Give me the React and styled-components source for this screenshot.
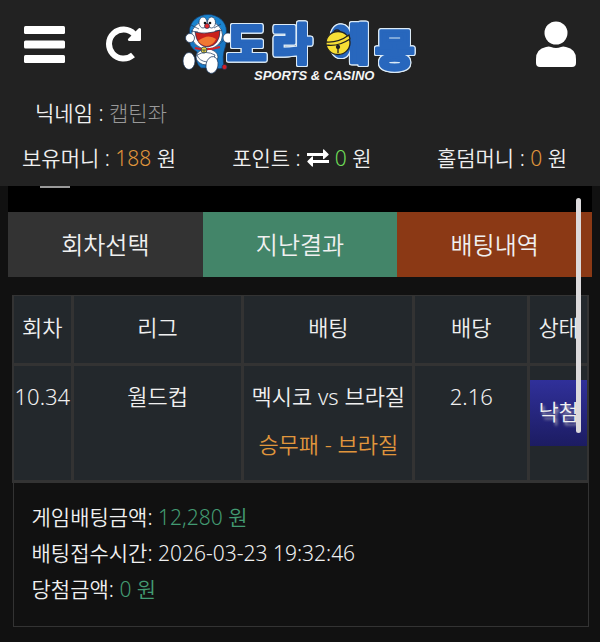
import React from "react";
import styled, { createGlobalStyle } from "styled-components";

const GlobalStyle = createGlobalStyle`
  * { box-sizing: border-box; }
  body {
    margin: 0;
    background: #111;
    color: #f0f0f0;
    font-family: "Noto Sans", "Noto Sans CJK KR", sans-serif;
    font-size: 21px;
    font-weight: 350;
  }
  button { font: inherit; color: inherit; border: 0; cursor: pointer; }
`;

const Page = styled.div`
  min-height: 100vh;
  position: relative;
`;

const Header = styled.header`
  background: #222;
  height: 186px;
`;

const TopBar = styled.div`
  display: flex;
  align-items: center;
  justify-content: space-between;
  height: 88px;
  padding: 0 24px;
`;

const ButtonGroup = styled.div`
  display: flex;
  align-items: center;
  gap: 41px;
`;

const IconButton = styled.button`
  display: flex;
  padding: 0;
  background: none;
`;

const LogoLink = styled.a`
  display: flex;
  margin-right: 80px;
`;

const Nickname = styled.div`
  padding: 9px 35px 0;
  line-height: 32px;
`;

const Muted = styled.span`
  color: #999;
  font-weight: 300;
`;

const Balances = styled.div`
  display: grid;
  grid-template-columns: 38fr 37fr auto;
  padding: 13px 33px 0 22px;
  line-height: 32px;
`;

const Balance = styled.span`
  display: inline-flex;
  align-items: center;
  gap: 6px;
  white-space: nowrap;
`;

const Amount = styled.span`
  color: ${(p) => p.$color};
`;

const Content = styled.main`
  padding: 0 8px 16px;
`;

const Strip = styled.div`
  height: 26px;
  padding-left: 32px;
  background: #000;
`;

const StripMark = styled.div`
  width: 30px;
  height: 2px;
  background: #999;
`;

const Tabs = styled.nav`
  display: grid;
  grid-template-columns: repeat(3, 1fr);
`;

const Tab = styled.button`
  height: 65px;
  padding: 0 0 2px;
  font-size: 24px;
  background: ${(p) => p.$bg};
`;

const BetTable = styled.table`
  width: calc(100% - 7px);
  margin: 18px 3px 0 4px;
  table-layout: fixed;
  border-collapse: collapse;
  font-size: 22px;
  border: 1px solid #333;
`;

const Col = styled.col`
  width: ${(p) => p.$w};
`;

const Th = styled.th`
  height: 69px;
  padding: 0 0 7px;
  background: #23282c;
  border: 3px solid #333;
  border-top-width: 1px;
  font-weight: 350;
  white-space: nowrap;
  &:first-child { border-left-width: 2px; }
  &:last-child { border-right-width: 2px; }
`;

const Td = styled.td`
  height: 117px;
  padding: ${(p) => (p.$flush ? "14px 0 0" : "6px 0")};
  background: #23282c;
  border: 3px solid #333;
  text-align: center;
  vertical-align: top;
  line-height: 48px;
  white-space: nowrap;
  &:first-child { border-left-width: 2px; }
  &:last-child { border-right-width: 2px; }
`;

const Pick = styled.div`
  color: #e0963c;
`;

const LostButton = styled.button`
  display: block;
  width: 100%;
  height: 66px;
  padding: 0 0 4px;
  background: linear-gradient(#30309a, #1c1c62);
  text-shadow: 2px 3px 3px #aab;
`;

const DetailCell = styled.td`
  padding: 16px 18px 19px;
  border: 1px solid #333;
  border-top: 3px solid #333;
  font-size: 21px;
  line-height: 36px;
`;

const ScrollThumb = styled.div`
  position: absolute;
  top: 198px;
  right: 19px;
  width: 5px;
  height: 235px;
  border-radius: 3px;
  background: #dcdadc;
`;

const Lettering = styled.g`
  fill: #2867bd;
  stroke: #2867bd;
  stroke-width: 3px;
  stroke-linejoin: round;
  font-family: "Noto Sans CJK KR", sans-serif;
  font-weight: 900;
  filter: drop-shadow(1px 0 0 #dcebf7) drop-shadow(-1px 0 0 #dcebf7)
    drop-shadow(0 1px 0 #dcebf7) drop-shadow(0 -1px 0 #dcebf7);
`;

const Logo = () => (
  <svg width="236" height="88" viewBox="0 -14 236 88" role="img" aria-label="도라에몽 SPORTS & CASINO">
    <g stroke="#17345c" strokeWidth="0.7">
      <path d="M37 18Q48 24 44 34Q41 42 43 53Q40 56 34 54H20Q13 48 16 38Q7 33 8 22L30 20Z" fill="#1978c4" />
      <ellipse cx="27" cy="17" rx="18.500" ry="16.500" fill="#1a84cf" />
      <ellipse cx="26" cy="21" rx="15.500" ry="14" fill="#fff" />
      <ellipse cx="22" cy="8.500" rx="4" ry="5.500" fill="#fff" />
      <ellipse cx="30.500" cy="8.500" rx="4" ry="5.500" fill="#fff" />
      <path d="M14 18Q26 21 39 16Q39 31 27 33Q16 33 14 18Z" fill="#c9201c" />
      <path d="M17 27Q27 19 35 25Q32 32 25 32Q20 31 17 27Z" fill="#f17832" stroke="none" />
      <circle cx="26" cy="12" r="2.500" fill="#e5282b" />
      <circle cx="9" cy="24" r="4.500" fill="#fff" />
      <circle cx="47" cy="24" r="5" fill="#fff" />
      <ellipse cx="26" cy="43" rx="11" ry="8" fill="#fff" />
      <path d="M16 41Q25 36 34 41Q32 48 26 48Q18 47 16 41Z" fill="#fff" />
      <path d="M14 34Q26 37 39 33" fill="none" stroke="#d62227" strokeWidth="2" />
      <circle cx="23" cy="36" r="3" fill="#efd33a" />
      <path d="M20 36H26M23 36V39" fill="none" />
      <ellipse cx="8" cy="47" rx="6" ry="8.500" fill="#fff" />
      <ellipse cx="31" cy="51" rx="6" ry="8.500" fill="#fff" transform="rotate(10 31 51)" />
      <circle cx="43.500" cy="53" r="2.500" fill="#d51f27" />
      <path d="M18 15L10 11M17 18L10 17M33 14L40 10M34 17L41 16" fill="none" />
    </g>
    <circle cx="24" cy="9" r="1.300" fill="#111" />
    <circle cx="29" cy="9" r="1.300" fill="#111" />
    <Lettering fontSize="43">
      <text x="46" y="46">도</text>
      <text x="91" y="46">라</text>
      <text x="149" y="46">에</text>
      <text x="194" y="52">몽</text>
    </Lettering>
    <g stroke="#222" strokeWidth="1.300">
      <circle cx="156" cy="19" r="3" fill="#f5d832" />
      <ellipse cx="157" cy="29" rx="12" ry="11.500" fill="#f7df35" />
      <path d="M145 28Q157 29 168 21L169 25Q157 33 145 31Z" fill="#f7df35" />
      <path d="M157 34V39" />
      <circle cx="157" cy="33" r="1.500" fill="#222" />
    </g>
    <text
      x="73"
      y="66"
      fill="#f4f4f4"
      fontFamily="'Liberation Sans', sans-serif"
      fontStyle="italic"
      fontWeight="700"
      fontSize="13"
    >
      SPORTS &amp; CASINO
    </text>
  </svg>
);

const MenuIcon = () => (
  <svg width="41" height="37" viewBox="0 0 41 37" fill="#fff" aria-hidden="true">
    <rect width="41" height="8" rx="1.500" />
    <rect y="14.500" width="41" height="8" rx="1.500" />
    <rect y="29" width="41" height="8" rx="1.500" />
  </svg>
);

const ReloadIcon = () => (
  <svg width="36" height="36" viewBox="0 0 36 36" aria-hidden="true">
    <path d="M27 29A14.5 14.5 0 1 1 28 8" fill="none" stroke="#fff" strokeWidth="6" />
    <path d="M35 3V13.500Q35 15 33.500 15H23Q21 14 22.500 12.500L32.500 2.500Q34 1.500 35 3Z" fill="#fff" />
  </svg>
);

const UserIcon = () => (
  <svg width="40" height="46" viewBox="0 0 40 46" fill="#fff" aria-hidden="true">
    <circle cx="20" cy="12" r="11.500" />
    <path d="M10 26Q13 25 15 26Q20 28 25 26Q27 25 30 26Q40 28 40 38V42Q40 46 36 46H4Q0 46 0 42V38Q0 28 10 26Z" />
  </svg>
);

const ExchangeIcon = () => (
  <svg width="22" height="18" viewBox="0 0 22 18" fill="#fff" aria-label="전환">
    <path d="M0 4H16V1Q16 0 17 0.500L21.500 5Q22 5.500 21.500 6L17 10Q16 10.500 16 9.500V7H0Z" />
    <path d="M22 11H6V8Q6 7 5 7.500L0.500 12Q0 12.500 0.500 13L5 17.500Q6 18 6 17V14H22Z" />
  </svg>
);

const TABS = [
  { label: "회차선택", bg: "#333" },
  { label: "지난결과", bg: "#438569" },
  { label: "배팅내역", bg: "#8b3915" },
];

const HEADINGS = ["회차", "리그", "배팅", "배당", "상태"];
const COLUMNS = ["10.3%", "29.7%", "29.7%", "20%", "10.3%"];

export default function App() {
  return (
    <Page>
      <GlobalStyle />
      <Header>
        <TopBar>
          <ButtonGroup>
            <IconButton aria-label="메뉴"><MenuIcon /></IconButton>
            <IconButton aria-label="새로고침"><ReloadIcon /></IconButton>
          </ButtonGroup>
          <LogoLink href="#"><Logo /></LogoLink>
          <IconButton aria-label="내 정보"><UserIcon /></IconButton>
        </TopBar>
        <Nickname>닉네임 : <Muted>캡틴좌</Muted></Nickname>
        <Balances>
          <Balance><span>보유머니 : <Amount $color="#e0963c">188</Amount> 원</span></Balance>
          <Balance>
            <span>포인트 :</span>
            <ExchangeIcon />
            <span><Amount $color="#6fdc58">0</Amount> 원</span>
          </Balance>
          <Balance><span>홀덤머니 : <Amount $color="#e0963c">0</Amount> 원</span></Balance>
        </Balances>
      </Header>
      <Content>
        <Strip><StripMark /></Strip>
        <Tabs>
          {TABS.map((t) => <Tab key={t.label} $bg={t.bg}>{t.label}</Tab>)}
        </Tabs>
        <BetTable>
          <colgroup>
            {COLUMNS.map((w, i) => <Col key={i} $w={w} />)}
          </colgroup>
          <thead>
            <tr>{HEADINGS.map((h) => <Th key={h} scope="col">{h}</Th>)}</tr>
          </thead>
          <tbody>
            <tr>
              <Td>10.34</Td>
              <Td>월드컵</Td>
              <Td>멕시코 vs 브라질<Pick>승무패 - 브라질</Pick></Td>
              <Td>2.16</Td>
              <Td $flush><LostButton>낙첨</LostButton></Td>
            </tr>
            <tr>
              <DetailCell colSpan={5}>
                <div>게임배팅금액: <Amount $color="#439a72">12,280 원</Amount></div>
                <div>배팅접수시간: 2026-03-23 19:32:46</div>
                <div>당첨금액: <Amount $color="#439a72">0 원</Amount></div>
              </DetailCell>
            </tr>
          </tbody>
        </BetTable>
      </Content>
      <ScrollThumb />
    </Page>
  );
}
